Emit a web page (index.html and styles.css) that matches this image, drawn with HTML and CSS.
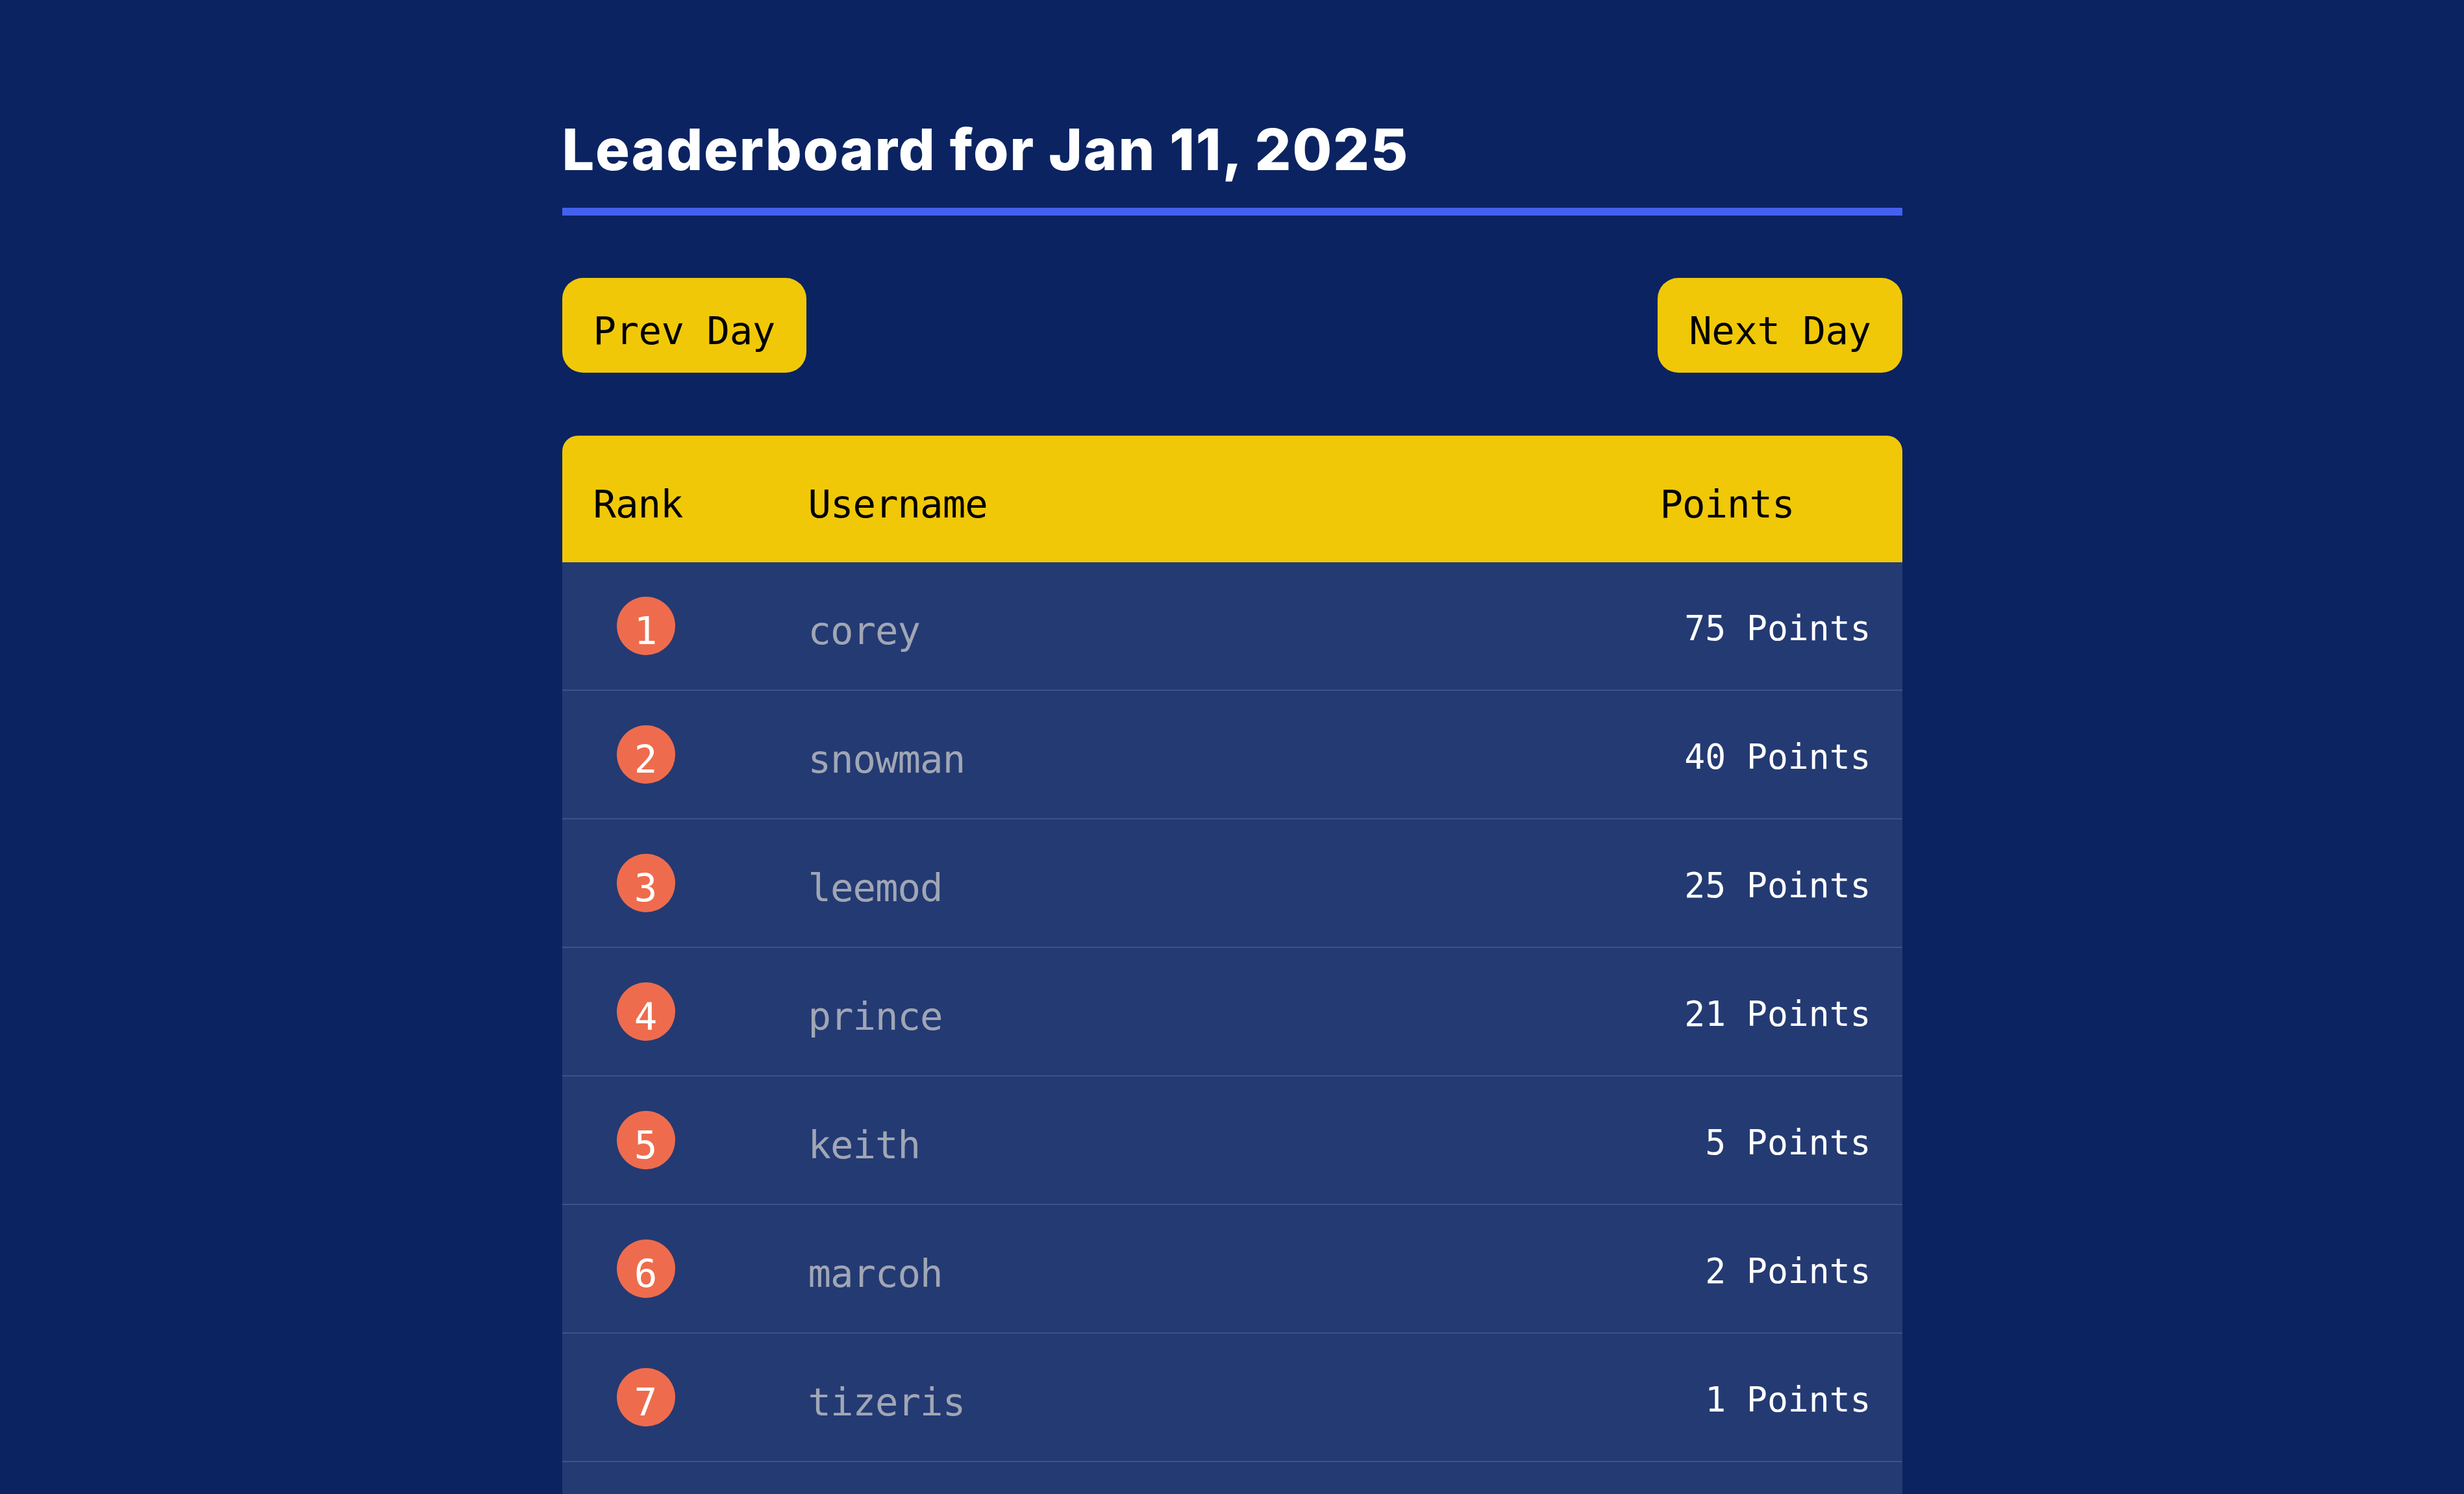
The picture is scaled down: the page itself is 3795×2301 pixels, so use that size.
FILE: index.html
```html
<!DOCTYPE html>
<html lang="en">
<head>
<meta charset="utf-8">
<title>Leaderboard</title>
<link rel="stylesheet" href="styles.css">
</head>
<body>
<main class="page">
  <h1 class="title">Leaderboard for Jan 11, 2025</h1>
  <nav class="day-nav">
    <button class="day-btn">Prev Day</button>
    <button class="day-btn">Next Day</button>
  </nav>
  <section class="board">
    <div class="board-head">
      <div>Rank</div>
      <div>Username</div>
      <div>Points</div>
    </div>
    <div class="board-row">
      <div class="rank"><div class="badge">1</div></div>
      <div class="user">corey</div>
      <div class="points">75 Points</div>
    </div>
    <div class="board-row">
      <div class="rank"><div class="badge">2</div></div>
      <div class="user">snowman</div>
      <div class="points">40 Points</div>
    </div>
    <div class="board-row">
      <div class="rank"><div class="badge">3</div></div>
      <div class="user">leemod</div>
      <div class="points">25 Points</div>
    </div>
    <div class="board-row">
      <div class="rank"><div class="badge">4</div></div>
      <div class="user">prince</div>
      <div class="points">21 Points</div>
    </div>
    <div class="board-row">
      <div class="rank"><div class="badge">5</div></div>
      <div class="user">keith</div>
      <div class="points">5 Points</div>
    </div>
    <div class="board-row">
      <div class="rank"><div class="badge">6</div></div>
      <div class="user">marcoh</div>
      <div class="points">2 Points</div>
    </div>
    <div class="board-row">
      <div class="rank"><div class="badge">7</div></div>
      <div class="user">tizeris</div>
      <div class="points">1 Points</div>
    </div>
  </section>
</main>
</body>
</html>
```
FILE: styles.css
```css
html, body {
  margin: 0;
  padding: 0;
  background: #0b2361;
}

body {
  font-family: "DejaVu Sans Mono", "Liberation Mono", monospace;
  color: #ffffff;
}

.page {
  width: 2064px;
  margin: 0 auto;
  padding-top: 177px;
}

.title {
  margin: 0;
  font-family: "Inter", "Roboto", sans-serif;
  font-weight: 800;
  font-size: 88px;
  line-height: 106px;
  letter-spacing: 1.8px;
  color: #ffffff;
  padding-bottom: 37px;
  border-bottom: 12px solid #4361ee;
}

.day-nav {
  display: flex;
  justify-content: space-between;
  margin-top: 96px;
}

.day-btn {
  font-family: "DejaVu Sans Mono", "Liberation Mono", monospace;
  font-size: 59px;
  line-height: 69px;
  letter-spacing: -0.5px;
  color: #000000;
  background: #f0c808;
  border: none;
  border-radius: 32px;
  padding: 47px 48px 30px;
  margin: 0;
}

.board {
  margin-top: 97px;
  border-radius: 24px 24px 0 0;
  overflow: hidden;
  background: #243a73;
  padding-bottom: 120px;
}

.board-head,
.board-row {
  display: grid;
  grid-template-columns: 331px 1fr 325px;
  padding: 0 48px;
}

.board-head {
  background: #f0c808;
  color: #000000;
  font-size: 59px;
  line-height: 69px;
  letter-spacing: -1px;
  padding-top: 71px;
  padding-bottom: 55px;
}

.board-row {
  align-items: baseline;
  padding-top: 53px;
  padding-bottom: 53px;
  border-bottom: 2px solid #3d5289;
}

.rank {
  padding-left: 36px;
}

.badge {
  box-sizing: border-box;
  width: 90px;
  height: 90px;
  border-radius: 50%;
  background: #ee6c4d;
  color: #ffffff;
  text-align: center;
  font-size: 59px;
  line-height: 59px;
  padding-top: 23px;
}

.user {
  font-size: 59px;
  letter-spacing: -1px;
  color: #a0a6b4;
}

.points {
  align-self: center;
  text-align: right;
  font-size: 53px;
  letter-spacing: 0;
  color: #ffffff;
  margin-top: 6px;
}
```
